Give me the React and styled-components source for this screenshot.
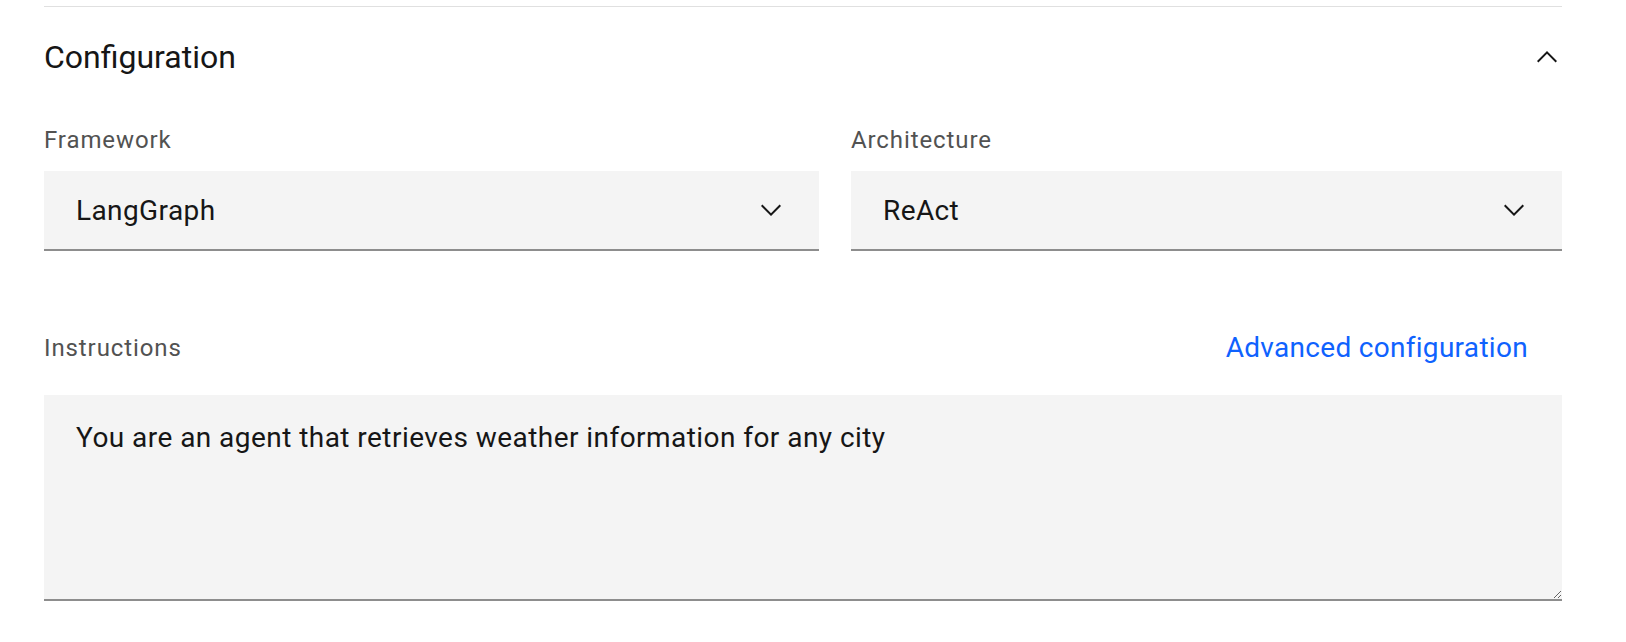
import React from 'react';
import styled, { createGlobalStyle } from 'styled-components';

const GlobalStyle = createGlobalStyle`
  html, body {
    margin: 0;
    padding: 0;
    background: #ffffff;
  }
  body {
    font-family: Roboto, "Noto Sans", "Liberation Sans", sans-serif;
    color: #161616;
  }
`;

const Page = styled.div`
  padding: 6px 64px 0 44px;
`;

const Section = styled.section`
  border-top: 1px solid #e0e0e0;
`;

const Header = styled.div`
  display: flex;
  align-items: center;
  justify-content: space-between;
  padding-top: 30px;
`;

const Title = styled.h2`
  margin: 0;
  font-size: 32px;
  line-height: 40px;
  font-weight: 400;
  color: #161616;
`;

const IconButton = styled.button`
  display: flex;
  align-items: center;
  justify-content: center;
  width: 32px;
  height: 32px;
  padding: 0;
  margin-right: -1px;
  border: none;
  background: transparent;
  color: #161616;
`;

const FieldGrid = styled.div`
  display: grid;
  grid-template-columns: 775fr 711fr;
  column-gap: 32px;
  margin-top: 47px;
`;

const Field = styled.div`
  display: flex;
  flex-direction: column;
`;

const Label = styled.label`
  display: block;
  font-size: 24px;
  line-height: 32px;
  letter-spacing: 0.9px;
  color: #525252;
  margin-bottom: 15px;
`;

const SelectBox = styled.div`
  display: flex;
  align-items: center;
  justify-content: space-between;
  box-sizing: border-box;
  height: 80px;
  padding: 0 32px 0 32px;
  background: #f4f4f4;
  border-bottom: 2px solid #8d8d8d;
  font-size: 28px;
  letter-spacing: 0.4px;
  color: #161616;
`;

const LabelRow = styled.div`
  display: flex;
  align-items: center;
  justify-content: space-between;
  margin-top: 70px;
  height: 54px;
  margin-bottom: 20px;

  & > ${Label} {
    margin-bottom: 0;
  }
`;

const Link = styled.a`
  font-size: 28px;
  line-height: 40px;
  color: #0f62fe;
  text-decoration: none;
  margin-right: 34px;
  letter-spacing: 0.3px;
`;

const TextArea = styled.textarea`
  display: block;
  width: 100%;
  box-sizing: border-box;
  height: 206px;
  margin: 0;
  padding: 23px 32px;
  border: none;
  border-bottom: 2px solid #8d8d8d;
  background: #f4f4f4;
  font-family: Roboto, "Noto Sans", "Liberation Sans", sans-serif;
  font-size: 28px;
  line-height: 40px;
  letter-spacing: 0.45px;
  color: #161616;
  resize: vertical;
  outline: none;
`;

const ChevronDown = () => (
  <svg width="32" height="32" viewBox="0 0 32 32" fill="currentColor">
    <path d="M16 22L6 12l1.4-1.4 8.6 8.6 8.6-8.6L26 12z" />
  </svg>
);

const ChevronUp = () => (
  <svg width="32" height="32" viewBox="0 0 32 32" fill="currentColor">
    <path d="M16 10l10 10-1.4 1.4-8.6-8.6-8.6 8.6L6 20z" />
  </svg>
);

const Select = ({ label, value }) => (
  <Field>
    <Label>{label}</Label>
    <SelectBox>
      <span>{value}</span>
      <ChevronDown />
    </SelectBox>
  </Field>
);

const App = () => {
  return (
    <>
      <GlobalStyle />
      <Page>
        <Section>
          <Header>
            <Title>Configuration</Title>
            <IconButton aria-label="Collapse">
              <ChevronUp />
            </IconButton>
          </Header>
          <FieldGrid>
            <Select label="Framework" value="LangGraph" />
            <Select label="Architecture" value="ReAct" />
          </FieldGrid>
          <LabelRow>
            <Label as="span">Instructions</Label>
            <Link href="#">Advanced configuration</Link>
          </LabelRow>
          <TextArea defaultValue="You are an agent that retrieves weather information for any city" />
        </Section>
      </Page>
    </>
  );
};

export default App;
